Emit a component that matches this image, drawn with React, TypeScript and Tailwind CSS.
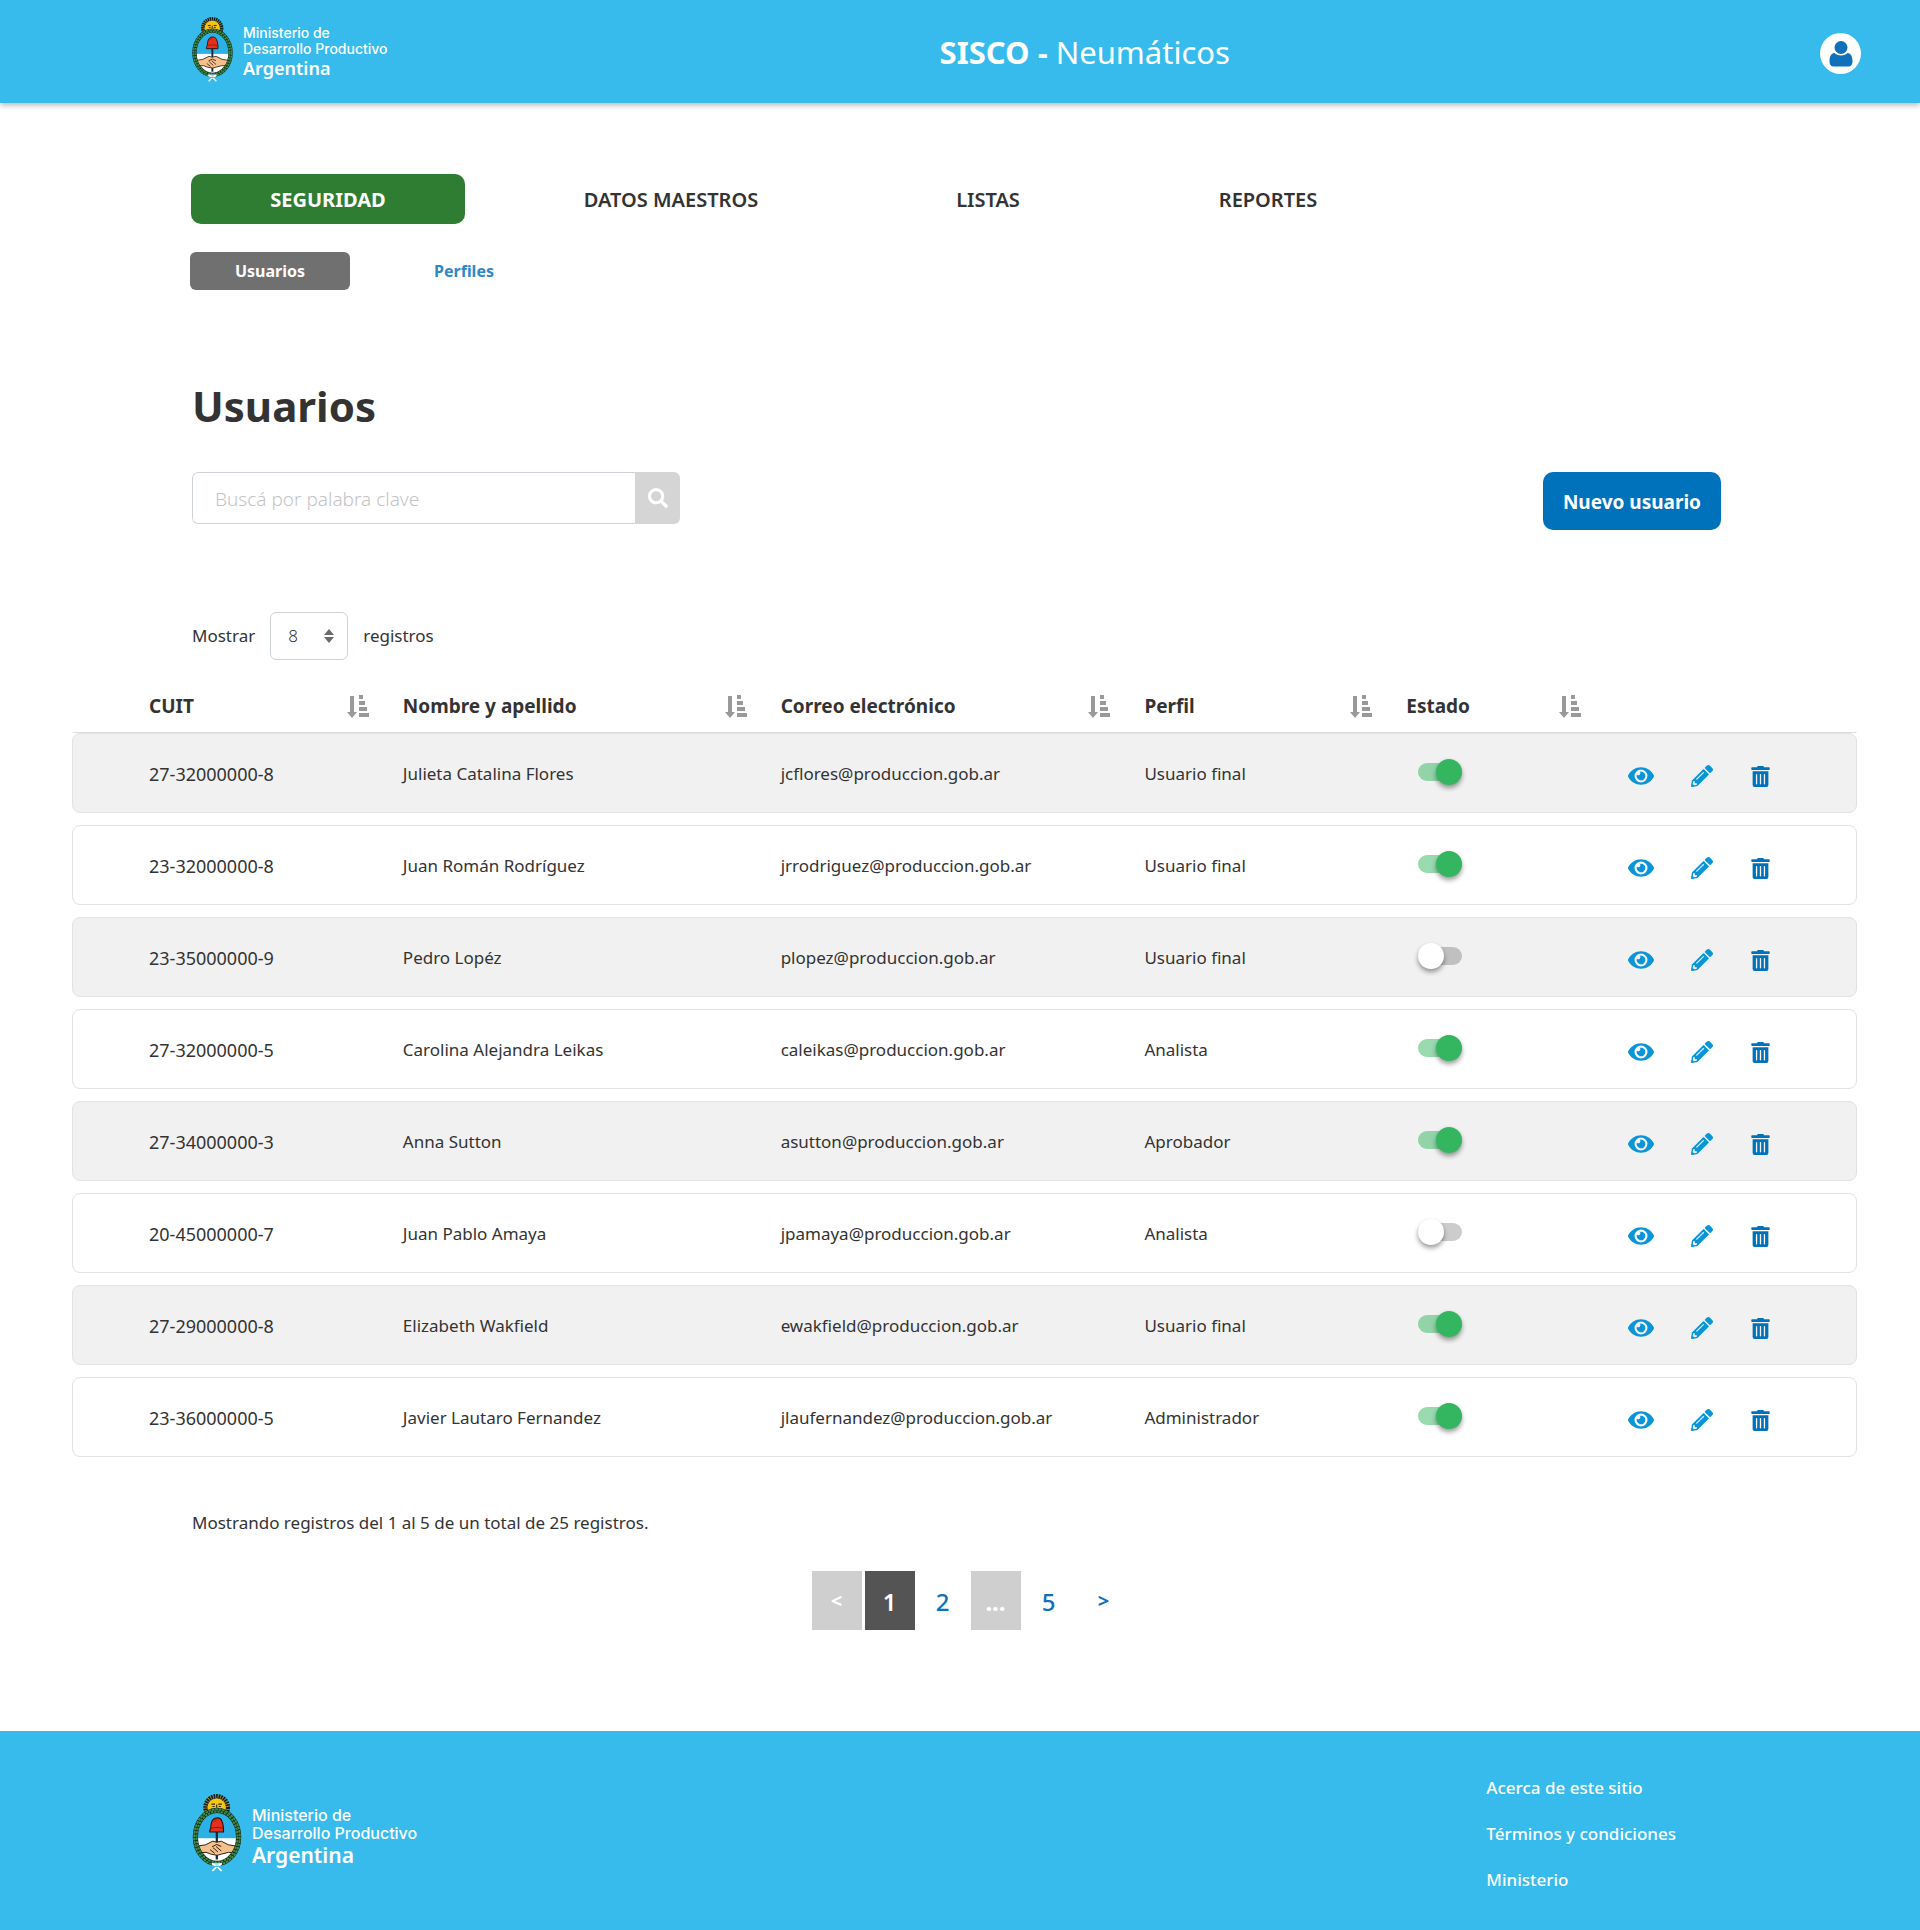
import { useState } from "react";
import { FaEye, FaPencilAlt, FaSearch, FaTrashAlt } from "react-icons/fa";

type User = {
  cuit: string;
  name: string;
  email: string;
  profile: string;
  active: boolean;
};

const users: User[] = [
  { cuit: "27-32000000-8", name: "Julieta Catalina Flores", email: "jcflores@produccion.gob.ar", profile: "Usuario final", active: true },
  { cuit: "23-32000000-8", name: "Juan Román Rodríguez", email: "jrrodriguez@produccion.gob.ar", profile: "Usuario final", active: true },
  { cuit: "23-35000000-9", name: "Pedro Lopéz", email: "plopez@produccion.gob.ar", profile: "Usuario final", active: false },
  { cuit: "27-32000000-5", name: "Carolina Alejandra Leikas", email: "caleikas@produccion.gob.ar", profile: "Analista", active: true },
  { cuit: "27-34000000-3", name: "Anna Sutton", email: "asutton@produccion.gob.ar", profile: "Aprobador", active: true },
  { cuit: "20-45000000-7", name: "Juan Pablo Amaya", email: "jpamaya@produccion.gob.ar", profile: "Analista", active: false },
  { cuit: "27-29000000-8", name: "Elizabeth Wakfield", email: "ewakfield@produccion.gob.ar", profile: "Usuario final", active: true },
  { cuit: "23-36000000-5", name: "Javier Lautaro Fernandez", email: "jlaufernandez@produccion.gob.ar", profile: "Administrador", active: true },
];

const columns = ["CUIT", "Nombre y apellido", "Correo electrónico", "Perfil", "Estado"];

const rowGrid = "grid grid-cols-[254fr_378fr_364fr_262fr_209fr_241fr] items-center border pl-[76px]";

function Crest({ className }: { className: string }) {
  return (
    <svg viewBox="36 66 150 238" className={className} aria-hidden="true">
      <circle cx="110" cy="107" r="33" fill="none" stroke="#b98f14" strokeWidth="12" />
      <circle cx="110" cy="107" r="34" fill="none" stroke="#10202a" strokeWidth="14" strokeDasharray="5 2.5" />
      <circle cx="110" cy="108" r="28" fill="#f6c414" />
      <path d="M94 97h11M115 97h11M97 104h7M116 104h7M110 98v10M104 112h12" stroke="#3a2d08" strokeWidth="3.500" fill="none" />
      <clipPath id="oval">
        <ellipse cx="111" cy="197" rx="62" ry="78" />
      </clipPath>
      <g clipPath="url(#oval)">
        <rect x="40" y="110" width="142" height="91" fill="#2cb1e6" />
        <rect x="40" y="201" width="142" height="80" fill="#fff" />
        <path d="M107 180h7v86h-7z" fill="#1c2b33" />
        <path d="M46 226l30-5 22-11 12 3 14-3 22 11 30 5v20l-30-2-20 5-14 4-18-3-16-6-32 2z" fill="#f6c08c" stroke="#2a1c12" strokeWidth="3" />
        <path d="M90 236l14 11M99 230l15 13M108 226l16 14M124 226l-14-6-14 7" stroke="#2a1c12" strokeWidth="3" fill="none" />
      </g>
      <path d="M89 182c-1-5 1-9 3-12 0-15 5-27 13-30 10-3 18 1 21 9 4 9 5 20 5 33z" fill="#e5301c" stroke="#2a1210" strokeWidth="3.500" />
      <path d="M92 171c12-4 26-4 38 0M102 150c2-4 5-5 8-5" stroke="#8d1a10" strokeWidth="3" fill="none" />
      <ellipse cx="111" cy="197" rx="66" ry="81" fill="none" stroke="#12281c" strokeWidth="16" />
      <ellipse cx="111" cy="197" rx="69.500" ry="84.500" fill="none" stroke="#3f8f48" strokeWidth="6" strokeDasharray="8 2.500" />
      <ellipse cx="111" cy="197" rx="62.500" ry="77.500" fill="none" stroke="#3f8f48" strokeWidth="6" strokeDasharray="7 3" />
      <path d="M96 276h28v9h-28z" fill="#9fdcf5" />
      <path d="M96 278c9 4 19 12 29 23M126 278c-9 4-19 12-29 23" stroke="#fff" strokeWidth="5" fill="none" />
      <path d="M105 287h12" stroke="#57b9df" strokeWidth="4" />
    </svg>
  );
}

function SortIcon() {
  return (
    <svg viewBox="0 0 22 23" className="h-[23px] w-[22px]" fill="#999" aria-hidden="true">
      <path d="M3 1h4v16H3zM0 17h10l-5 6zM12 0h4v4h-4zM12 6h6v4h-6zM12 12h8v4h-8zM12 18h10v4H12z" />
    </svg>
  );
}

function UserRow({ user, striped }: { user: User; striped: boolean }) {
  const [active, setActive] = useState(user.active);
  return (
    <tr className={`${rowGrid} h-20 rounded-lg border-[#e2e2e2] ${striped ? "bg-[#f1f1f1]" : "bg-white"}`}>
      <td className="pt-[2px] text-[18px]">{user.cuit}</td>
      <td className="pt-[2px]">{user.name}</td>
      <td className="pt-[2px]">{user.email}</td>
      <td className="pt-[2px]">{user.profile}</td>
      <td className="flex pb-[2px] pl-3">
        <input
          type="checkbox"
          role="switch"
          aria-label={`Estado de ${user.name}`}
          checked={active}
          onChange={() => setActive(!active)}
          className="relative h-[18px] w-11 cursor-pointer appearance-none rounded-full bg-black/20 before:absolute before:-top-1 before:left-0 before:size-[26px] before:rounded-full before:bg-white before:shadow-[0_3px_5px_rgba(0,0,0,0.4)] checked:bg-[#34b560]/50 checked:before:left-[18px] checked:before:bg-[#34b560]"
        />
      </td>
      <td className="flex items-center gap-[37px] pt-[6px] pl-[13px] text-[#0a95d8]">
        <button type="button" aria-label="Ver"><FaEye size={26} /></button>
        <button type="button" aria-label="Editar"><FaPencilAlt size={22} /></button>
        <button type="button" aria-label="Eliminar" className="text-[#0072bc]"><FaTrashAlt size={21} /></button>
      </td>
    </tr>
  );
}

export default function App() {
  return (
    <div className="bg-white font-['Noto_Sans',sans-serif] text-[17px] leading-6 text-[#333]">
      <header className="relative flex h-[103px] items-center bg-[#37bbed] pr-[59px] pl-48 text-white shadow-[0_2px_6px_rgba(0,0,0,0.3)]">
        <a href="#" className="flex items-center gap-[10px] pb-1 font-['Inter',sans-serif] font-medium">
          <Crest className="h-[67px] w-[41px]" />
          <span className="flex flex-col pt-1 text-[14px] leading-4">
            <span>Ministerio de</span>
            <span>Desarrollo Productivo</span>
            <span className="font-['Noto_Sans',sans-serif] text-[18px] leading-[22px] font-semibold">Argentina</span>
          </span>
        </a>
        <p className="flex-1 pr-[38px] text-center text-[31px] leading-10">
          <strong>SISCO -</strong> Neumáticos
        </p>
        <button type="button" aria-label="Mi cuenta" className="mt-1 flex size-[41px] items-center justify-center rounded-full bg-white">
          <svg viewBox="0 0 24 26" className="h-[26px] w-6" fill="#1070ba" aria-hidden="true">
            <path d="M5.500 12C2 12 .5 16 .5 20.500C.5 23.500 2 25.500 4.500 25.500H19.500C22 25.500 23.500 23.500 23.500 20.500C23.500 16 22 12 18.500 12C17 13.500 15 14.500 12 14.500S7 13.500 5.500 12z" />
            <circle cx="12" cy="6.500" r="6.500" />
          </svg>
        </button>
      </header>

      <main className="pt-[71px]">
        <nav aria-label="Principal" className="flex gap-[38px] pl-[191px] text-[20px] font-semibold">
          <a href="#" className="flex h-[50px] w-[274px] items-center justify-center rounded-[10px] bg-[#2e7d33] pt-[2px] font-bold text-white">SEGURIDAD</a>
          <a href="#" className="flex h-[50px] w-[336px] items-center justify-center pt-[2px]">DATOS MAESTROS</a>
          <a href="#" className="flex h-[50px] w-[222px] items-center justify-center pt-[2px]">LISTAS</a>
          <a href="#" className="flex h-[50px] w-[262px] items-center justify-center pt-[2px]">REPORTES</a>
        </nav>
        <nav aria-label="Seguridad" className="mt-7 flex gap-[34px] pl-[190px] text-[16px] font-bold">
          <a href="#" className="flex h-[38px] w-40 items-center justify-center rounded-md bg-[#707070] text-white">Usuarios</a>
          <a href="#" className="flex h-[38px] w-40 items-center justify-center text-[#2f87c8]">Perfiles</a>
        </nav>

        <h1 className="mt-[86px] pl-48 text-[42px] leading-[60px] font-bold">Usuarios</h1>

        <div className="mt-9 flex items-start justify-between pr-[199px] pl-48">
          <form className="flex h-[52px] w-[488px] overflow-hidden rounded-md">
            <input
              type="search"
              aria-label="Buscar"
              placeholder="Buscá por palabra clave"
              className="min-w-0 flex-1 rounded-l-md border border-r-0 border-[#cdd1d8] pt-[2px] pl-[22px] text-[19px] font-light outline-none placeholder:text-[#c4c4c4]"
            />
            <button type="button" aria-label="Buscar" className="flex w-[45px] items-center justify-center bg-[#d5d5d5] text-white">
              <FaSearch size={20} />
            </button>
          </form>
          <button type="button" className="h-[58px] rounded-[10px] bg-[#0072bc] px-5 pt-[2px] text-[19px] font-bold text-white">Nuevo usuario</button>
        </div>

        <div className="mt-[82px] flex items-center pl-48">
          <label htmlFor="page-size">Mostrar</label>
          <div className="relative mr-[15px] ml-[15px]">
            <select id="page-size" defaultValue="8" className="h-12 w-[78px] appearance-none rounded-md border border-[#cdd1d8] bg-white pl-[17px] font-light">
              <option>8</option>
              <option>16</option>
            </select>
            <svg viewBox="0 0 10 14" className="pointer-events-none absolute top-[17px] right-[14px] h-[14px] w-[10px]" fill="#6b6b6b" aria-hidden="true">
              <path d="M5 0l5 6H0zM0 8h10l-5 6z" />
            </svg>
          </div>
          <span>registros</span>
        </div>

        <table className="mt-[19px] block pr-[63px] pl-[72px] text-left">
          <thead className="block">
            <tr className={`${rowGrid} h-[54px] border-x-transparent border-t-transparent border-b-[#dcdcdc]`}>
              {columns.map((column) => (
                <th key={column} scope="col" className="flex items-center justify-between pr-[34px] text-[19px] font-bold">
                  {column}
                  <button type="button" aria-label={`Ordenar por ${column}`}><SortIcon /></button>
                </th>
              ))}
              <th aria-label="Acciones" />
            </tr>
          </thead>
          <tbody className="flex flex-col gap-3">
            {users.map((user, i) => (
              <UserRow key={user.cuit} user={user} striped={i % 2 === 0} />
            ))}
          </tbody>
        </table>

        <p className="mt-[54px] pl-48">Mostrando registros del 1 al 5 de un total de 25 registros.</p>

        <nav aria-label="Paginación" className="mt-9 flex justify-center gap-[3px] pl-[18px] text-[24px] font-medium text-[#0f70bb]">
          <button type="button" aria-label="Anterior" className="h-[59px] w-[50px] bg-[#cfcfcf] text-[20px] font-bold text-white">&lt;</button>
          <button type="button" aria-current="page" className="h-[59px] w-[50px] bg-[#545454] pt-[2px] font-semibold text-white">1</button>
          <button type="button" className="h-[59px] w-[50px] pt-[2px]">2</button>
          <span className="flex h-[59px] w-[50px] items-center justify-center bg-[#cfcfcf] pt-[2px] font-bold text-white">...</span>
          <button type="button" className="h-[59px] w-[50px] pt-[2px]">5</button>
          <button type="button" aria-label="Siguiente" className="h-[59px] w-[50px] pl-1 text-[20px] font-bold">&gt;</button>
        </nav>
      </main>

      <footer className="mt-[101px] flex justify-between bg-[#37bbed] pr-[244px] pl-48 text-white">
        <a href="#" className="flex items-center gap-[10px] pt-1 font-['Inter',sans-serif] font-medium">
          <Crest className="h-[78px] w-[50px]" />
          <span className="flex flex-col pt-2 text-[16px] leading-[18px]">
            <span>Ministerio de</span>
            <span>Desarrollo Productivo</span>
            <span className="font-['Noto_Sans',sans-serif] text-[21px] leading-[26px] font-semibold">Argentina</span>
          </span>
        </a>
        <ul className="flex flex-col gap-[22px] pt-[45px] pb-[38px] font-medium">
          <li><a href="#">Acerca de este sitio</a></li>
          <li><a href="#">Términos y condiciones</a></li>
          <li><a href="#">Ministerio</a></li>
        </ul>
      </footer>
    </div>
  );
}
